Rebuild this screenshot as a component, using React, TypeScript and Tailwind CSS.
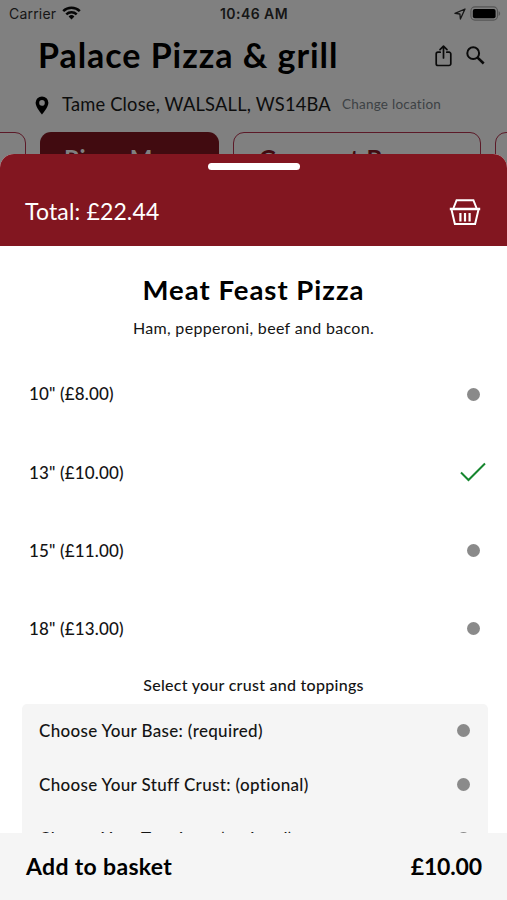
import React from "react";

const sizes = [
  { label: '10" (£8.00)', selected: false },
  { label: '13" (£10.00)', selected: true },
  { label: '15" (£11.00)', selected: false },
  { label: '18" (£13.00)', selected: false },
];

const extras = [
  "Choose Your Base: (required)",
  "Choose Your Stuff Crust: (optional)",
  "Choose Your Toppings: (optional)",
];

function Dot() {
  return <span className="block h-[13px] w-[13px] rounded-full bg-[#8a8a8a]" />;
}

function StatusBar() {
  return (
    <div className="flex h-7 items-center justify-between pr-[6px] pl-[9px] font-['Inter',sans-serif] text-[14px] leading-7 text-[#161616]">
      <div className="flex w-[118px] items-center gap-[6px]">
        <span className="tracking-[0.2px]">Carrier</span>
        <svg width="19" height="14" viewBox="0 0 19 14" className="-mt-[2px]" fill="none" stroke="#060606" strokeWidth="2.5">
          <path d="M1.2 5.2a11.8 11.8 0 0 1 16.6 0" />
          <path d="M4.3 8.4a7.4 7.4 0 0 1 10.4 0" />
          <path d="M9.5 13.4 6.6 10.5a4.1 4.1 0 0 1 5.8 0Z" fill="#060606" stroke="none" />
        </svg>
      </div>
      <span className="font-semibold tracking-[0.45px]">10:46 AM</span>
      <div className="flex w-[120px] items-center justify-end gap-[4px]">
        <svg width="12" height="12" viewBox="0 0 12 12" fill="none" stroke="#161616" strokeWidth="1.3" strokeLinejoin="round">
          <path d="M11 1 1 5.4l4.9.6.5 5Z" />
        </svg>
        <svg width="31" height="15" viewBox="0 0 31 15" className="-mt-[1px]">
          <rect x="0.9" y="0.9" width="26.6" height="13.2" rx="4" fill="none" stroke="#555" strokeWidth="1.1" />
          <rect x="2.8" y="2.9" width="22.8" height="9.3" rx="2" fill="#000" />
          <path d="M28.6 5.2c2 .7 2 4 0 4.700Z" fill="#555" />
        </svg>
      </div>
    </div>
  );
}

function ShopHeader() {
  return (
    <>
      <div className="flex h-[56px] items-center justify-between pr-[22px] pl-[38px]">
        <h1 className="-mt-[2px] text-[34px] leading-[54px] font-bold tracking-[0.95px] whitespace-nowrap text-black">Palace Pizza &amp; grill</h1>
        <div className="-mt-px flex items-center gap-[14px]">
          <svg width="17" height="22" viewBox="0 0 17 22" fill="none" stroke="#0a0a0a" strokeWidth="1.7" strokeLinecap="round" strokeLinejoin="round">
            <path d="M5.2 7.2H3A1.8 1.8 0 0 0 1.2 9v9.7a1.8 1.8 0 0 0 1.8 1.8h11a1.8 1.8 0 0 0 1.8-1.8V9A1.8 1.8 0 0 0 14 7.2h-2.2" />
            <path d="M8.5 13V1.4M5 4.6l3.5-3.4L12 4.6" />
          </svg>
          <svg width="19" height="19" viewBox="0 0 19 19" fill="none" stroke="#0a0a0a">
            <circle cx="7.2" cy="7.2" r="5.9" strokeWidth="2" />
            <path d="m11.6 11.6 6.1 5.900" strokeWidth="2.6" />
          </svg>
        </div>
      </div>
      <div className="flex h-[42px] items-center pl-[35px] whitespace-nowrap">
        <svg width="14" height="19" viewBox="0 0 14 19" fill="#000">
          <path fillRule="evenodd" d="M7 .4A6.4 6.4 0 0 0 .6 6.8C.6 11.5 7 18.5 7 18.5S13.4 11.5 13.4 6.8A6.4 6.4 0 0 0 7 .4Zm0 3.7a2.8 2.8 0 1 1 0 5.6 2.8 2.8 0 0 1 0-5.6Z" />
        </svg>
        <span className="ml-[13px] text-[18.3px] tracking-[0.2px] text-[#0d0d0d]">Tame Close, WALSALL, WS14BA</span>
        <span className="-mt-px ml-[11px] text-[13.5px] tracking-[0.25px] text-[#3d4245]">Change location</span>
      </div>
      <div className="mt-[6px] flex h-[58px] w-[700px] gap-[14px] text-[24px] leading-[54px] font-bold tracking-[0.8px]">
        <div className="-ml-[60px] w-[86px] shrink-0 rounded-[11px] border-[1.5px] border-[#5c1a28]" />
        <div className="w-[179px] shrink-0 rounded-[11px] bg-[#410b10] pl-[24px] text-[#808080]">Pizza Menu</div>
        <div className="w-[248px] shrink-0 rounded-[11px] border-[1.5px] border-[#5c1a28] pl-[25px] leading-[52px] text-[#410b10]">Gourmet Burgers</div>
        <div className="w-[120px] shrink-0 rounded-[11px] border-[1.5px] border-[#5c1a28]" />
      </div>
    </>
  );
}

function BasketIcon() {
  return (
    <svg width="32" height="28" viewBox="0 0 32 28" fill="none" stroke="#fff" strokeWidth="2">
      <path d="M4.5 10 7.6 2.2h16.8l3.1 7.8" />
      <path d="M.8 11h30.400" strokeWidth="2.6" />
      <path d="m2.600 12 3.300 14h20.200l3.300-14" />
      <path d="M11.400 15v8.500M16 15v8.500M20.600 15v8.500" strokeWidth="2.200" />
    </svg>
  );
}

export default function App() {
  return (
    <div className="relative h-[900px] w-[507px] overflow-hidden bg-[#808080] font-['Lato',sans-serif]">
      <StatusBar />
      <ShopHeader />
      <section className="absolute inset-x-0 top-[154px] bottom-0 flex flex-col overflow-hidden rounded-t-[14px] bg-white text-[#141414]">
        <header className="h-[92px] shrink-0 bg-[#821620] pt-[9px]">
          <div className="mx-auto h-[7px] w-[92px] rounded-full bg-white" />
          <div className="flex h-[84px] items-center justify-between pr-[26px] pl-[25px]">
            <span className="-mt-[2px] text-[23px] tracking-[0.15px] text-white">Total: £22.44</span>
            <BasketIcon />
          </div>
        </header>
        <div className="flex min-h-0 flex-1 flex-col overflow-hidden">
          <h2 className="mt-[26px] text-center text-[27.5px] leading-9 font-bold tracking-[1px] text-black">Meat Feast Pizza</h2>
          <p className="mt-[8px] text-center text-[16px] leading-6 tracking-[0.33px]">Ham, pepperoni, beef and bacon.</p>
          <ul className="mt-[15px]">
            {sizes.map((s) => (
              <li key={s.label} className="flex h-[78.2px] items-center justify-between pr-[27.5px] pl-[29px] text-[17px] font-medium tracking-[0.15px]">
                <span>{s.label}</span>
                {s.selected ? (
                  <svg width="26" height="20" viewBox="0 0 26 20" className="-mr-[6px]" fill="none" stroke="#16862f" strokeWidth="2">
                    <path d="m1 10.5 7.5 7.5L25 1.5" />
                  </svg>
                ) : (
                  <Dot />
                )}
              </li>
            ))}
          </ul>
          <p className="mt-[5px] text-center text-[16px] leading-6 font-medium tracking-[0.27px]">Select your crust and toppings</p>
          <ul className="mt-[7px] mr-[19px] ml-[22px] shrink-0 rounded-[5px] bg-[#f5f5f5]">
            {extras.map((e) => (
              <li key={e} className="flex h-[54px] items-center justify-between pr-[18.5px] pl-[17px] text-[17px] font-medium tracking-[0.34px]">
                <span>{e}</span>
                <Dot />
              </li>
            ))}
          </ul>
        </div>
        <footer className="flex h-[67px] shrink-0 items-center justify-between bg-[#f5f5f5] pr-[25px] pb-px pl-[26px] text-[23px] font-bold text-black">
          <span className="tracking-[0.33px]">Add to basket</span>
          <span className="tracking-[-0.15px]">£10.00</span>
        </footer>
      </section>
    </div>
  );
}
